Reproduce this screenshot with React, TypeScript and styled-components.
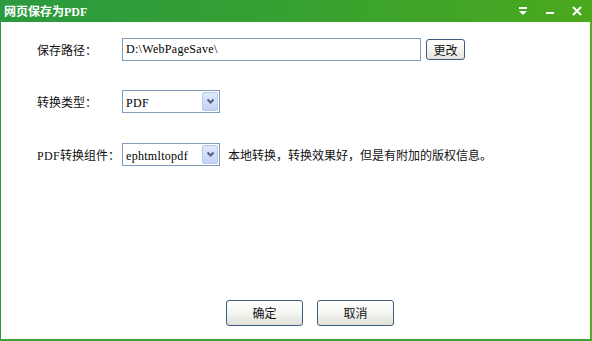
import React from "react";
import styled, { createGlobalStyle } from "styled-components";

const Global = createGlobalStyle`
  html, body { margin: 0; padding: 0; background: #fff; }
  body { font-family: "Liberation Serif", "Noto Sans CJK SC", serif; }
`;

const Window = styled.div`
  width: 592px;
  height: 341px;
  box-sizing: border-box;
  display: flex;
  flex-direction: column;
  background: #fff;
  border-left: 1px solid #2f9a3e;
  border-right: 2px solid #55ac27;
  border-bottom: 2px solid #3aa43a;
`;

const TitleBar = styled.div`
  height: 22px;
  flex: none;
  display: flex;
  align-items: center;
  padding-left: 4px;
  margin-left: -1px;
  margin-right: -2px;
  background: linear-gradient(90deg, #2a9a3e 0%, #35a033 45%, #4aa81c 100%);
`;

const Title = styled.div`
  color: #fff;
  font-weight: bold;
  font-size: 12px;
  font-family: "Liberation Serif", "Noto Sans CJK SC", serif;
  flex: 1;
`;

const Ctrls = styled.div`
  display: flex;
  align-items: center;
  gap: 11px;
  padding-right: 7px;
`;

const CtrlIcon = styled.svg`
  width: 16px;
  height: 16px;
  display: block;
`;

const Body = styled.div`
  flex: 1;
  display: flex;
  flex-direction: column;
  padding: 16px 0 13px 36px;
`;

const Row = styled.div<{ $mt: number }>`
  display: flex;
  align-items: center;
  height: 23px;
  margin-top: ${(p) => p.$mt}px;
`;

const Label = styled.div`
  width: 85px;
  font-size: 12px;
  color: #111;
`;

const Latin = styled.span`
  font-family: "Liberation Serif", serif;
  font-size: 12px;
  letter-spacing: 0.3px;
`;

const TextInput = styled.div`
  width: 299px;
  height: 23px;
  box-sizing: border-box;
  border: 1px solid #7f9db9;
  display: flex;
  align-items: center;
  padding-left: 3px;
  color: #000;
`;

const SmallBtn = styled.div`
  margin-left: 5px;
  width: 39px;
  height: 21px;
  box-sizing: border-box;
  border: 1px solid #3e5c7e;
  border-radius: 3px;
  background: linear-gradient(#ffffff, #f2f2ee 60%, #e2e2da);
  display: flex;
  align-items: center;
  justify-content: center;
  font-size: 12px;
  color: #111;
`;

const Select = styled.div`
  width: 98px;
  height: 23px;
  box-sizing: border-box;
  border: 1px solid #7f9db9;
  display: flex;
  align-items: center;
  padding: 1px 1px 1px 3px;
`;

const SelText = styled.div`
  flex: 1;
  color: #000;
`;

const Arrow = styled.div`
  width: 16px;
  height: 19px;
  box-sizing: border-box;
  border: 1px solid #b9c9ea;
  border-radius: 2px;
  background: linear-gradient(#dfe9fb, #c4d4f4);
  display: flex;
  align-items: center;
  justify-content: center;
`;

const Note = styled.div`
  margin-left: 8px;
  font-size: 12px;
  color: #111;
`;

const Footer = styled.div`
  margin-top: auto;
  display: flex;
  gap: 14px;
  padding-left: 189px;
`;

const DlgBtn = styled.div`
  width: 77px;
  height: 26px;
  box-sizing: border-box;
  border: 1px solid #3e5c7e;
  border-radius: 3px;
  background: linear-gradient(#ffffff, #f3f3ef 55%, #e0e0d8);
  display: flex;
  align-items: center;
  justify-content: center;
  font-size: 12px;
  color: #111;
`;

const Chevron = () => (
  <svg width="9" height="7" viewBox="0 0 9 7">
    <path d="M1.5 1.5 L4.5 4.5 L7.5 1.5" stroke="#4d6185" strokeWidth="2" fill="none" />
  </svg>
);

export default function App() {
  return (
    <>
      <Global />
      <Window>
        <TitleBar>
          <Title>网页保存为PDF</Title>
          <Ctrls>
            <CtrlIcon viewBox="0 0 16 16">
              <rect x="4" y="4" width="8" height="2" fill="#fff" />
              <path d="M4 8 L12 8 L8 12 Z" fill="#fff" />
            </CtrlIcon>
            <CtrlIcon viewBox="0 0 16 16">
              <rect x="4" y="9" width="8" height="2" fill="#fff" />
            </CtrlIcon>
            <CtrlIcon viewBox="0 0 16 16">
              <path d="M4 4 L12 12 M12 4 L4 12" stroke="#fff" strokeWidth="2" />
            </CtrlIcon>
          </Ctrls>
        </TitleBar>
        <Body>
          <Row $mt={0}>
            <Label>保存路径：</Label>
            <TextInput>
              <Latin>D:\WebPageSave\</Latin>
            </TextInput>
            <SmallBtn>更改</SmallBtn>
          </Row>
          <Row $mt={29}>
            <Label>转换类型：</Label>
            <Select>
              <SelText>
                <Latin>PDF</Latin>
              </SelText>
              <Arrow>
                <Chevron />
              </Arrow>
            </Select>
          </Row>
          <Row $mt={30}>
            <Label>
              <Latin>PDF</Latin>转换组件：
            </Label>
            <Select>
              <SelText>
                <Latin>ephtmltopdf</Latin>
              </SelText>
              <Arrow>
                <Chevron />
              </Arrow>
            </Select>
            <Note>本地转换，转换效果好，但是有附加的版权信息。</Note>
          </Row>
          <Footer>
            <DlgBtn>确定</DlgBtn>
            <DlgBtn>取消</DlgBtn>
          </Footer>
        </Body>
      </Window>
    </>
  );
}
